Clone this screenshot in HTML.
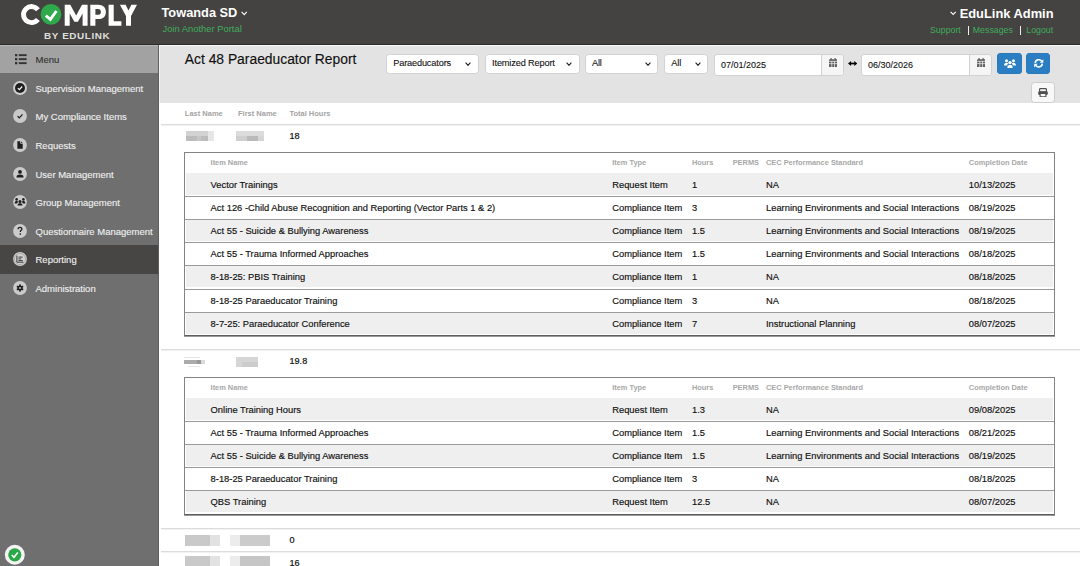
<!DOCTYPE html>
<html><head><meta charset="utf-8">
<style>
*{box-sizing:border-box;margin:0;padding:0}
html,body{width:1080px;height:566px;overflow:hidden;background:#fff;font-family:"Liberation Sans",sans-serif}
body{position:relative}
.a{position:absolute;white-space:nowrap}
#hdr{left:0;top:0;width:1080px;height:45px;background:#454341;border-bottom:1px solid #2d2b29}
#side{left:0;top:45px;width:159px;height:521px;background:#6f6f6f;border-right:1px solid #5e5e5e}
#menu{left:0;top:0;width:158px;height:28px;background:#a2a2a2;border-top:1px solid #b8b8b8}
.si{position:absolute;left:0;width:158px;height:28.6px;color:#f0f0f0;font-size:9.5px;line-height:30.4px;-webkit-text-stroke:0.12px currentColor;padding-left:35.5px;white-space:nowrap}
.si svg{position:absolute;left:13.3px;top:7px;width:14px;height:14px}
#tool{left:159px;top:45px;width:921px;height:58px;background:#e3e3e3;border-top:1px solid #fafafa;border-left:1px solid #f4f4f4}
.dd{position:absolute;top:53.5px;height:20px;background:#fff;border:1px solid #d2d2d2;border-radius:3.5px;font-size:9.2px;letter-spacing:-0.15px;color:#111;line-height:17px;-webkit-text-stroke:0.1px #111;padding-left:6.5px;white-space:nowrap}
.dd svg{position:absolute;top:7px;width:6px;height:4.2px}
.dt{position:absolute;top:53.6px;height:22.4px;background:#fff;border:1px solid #d2d2d2;border-radius:3px;font-size:9px;color:#111;line-height:20.4px;padding-left:6px;-webkit-text-stroke:0.1px #111}
.dt .ad{position:absolute;right:0;top:0;width:22px;height:20.4px;background:#f5f5f5;border-left:1px solid #d2d2d2;border-radius:0 3px 3px 0}
.dt .ad svg{position:absolute;left:6.6px;top:3.3px;width:8.4px;height:9.2px}
.btn{position:absolute;top:53px;height:21px;background:#2b7ec1;border-radius:3px;border:1px solid #2a7abb}
.btn svg{position:absolute}
.lk{top:25.5px;font-size:8.8px;color:#40ac5c;line-height:8.8px}
.hl{position:absolute;left:161px;width:920px;height:1px;background:#dcdcdc;box-shadow:0 1px 0 #f2f2f2}
.lbl{position:absolute;font-size:7.5px;font-weight:bold;color:#a4a4a4;white-space:nowrap;line-height:10px}
.num{position:absolute;left:289.5px;font-size:9.1px;color:#111;line-height:12px;-webkit-text-stroke:0.2px #111}
.bl1{position:absolute;background:#c9c9c9}
.tb{position:absolute;left:184px;width:871px;border:1px solid #838383;border-bottom:1px solid #5e5e5e;box-shadow:0 1px 0 #9a9a9a;background:#fff}
.th{position:absolute;left:0;top:0;width:100%;height:20px}
.th span{position:absolute;top:0;line-height:20px;font-size:7.4px;font-weight:bold;color:#a8a8a8;white-space:nowrap}
.r{position:absolute;left:0;width:100%;height:23.1px;font-size:9.35px;color:#111;-webkit-text-stroke:0.16px #111}
.r.g{background:#efefef;box-shadow:inset 1px 0 0 #fff, inset -1px 0 0 #fff, inset 0 -1px 0 #fff}
.r.bl{border-top:1px solid #9a9a9a}
.r span{position:absolute;top:1px;line-height:22px;white-space:nowrap}
.r.bl span{top:0}
</style></head><body>
<div id="hdr" class="a">
  <svg class="a" style="left:0;top:0" width="150" height="44" viewBox="0 0 150 44">
    <path d="M37.94 9.64 A8.05 8.05 0 1 0 37.94 19.56" fill="none" stroke="#fff" stroke-width="4.9"/>
    <circle cx="51" cy="14.4" r="10.4" fill="#2eaa4c"/>
    <path d="M45.8 15.6 L50.4 19.4 L56.4 11" fill="none" stroke="#fff" stroke-width="2.8"/>
    <path d="M64.7 25.7 V4.7 H70.3 L76.15 15.5 L82 4.7 H87.6 V25.7 H82.6 V13.5 L77.9 21.8 H74.4 L69.7 13.5 V25.7 Z" fill="#fff"/>
    <path d="M90.3 25.7 V4.7 H98.2 C103.2 4.7 105.9 7.6 105.9 11.9 C105.9 16.2 103.2 19.1 98.2 19.1 H95.4 V25.7 Z M95.4 9 V14.8 H97.9 C99.9 14.8 100.9 13.7 100.9 11.9 C100.9 10.1 99.9 9 97.9 9 Z" fill="#fff"/>
    <path d="M108.6 4.7 H113.7 V21.3 H121.4 V25.7 H108.6 Z" fill="#fff"/>
    <path d="M119.9 4.7 H125.6 L128.5 10.6 L131.4 4.7 H137 L131 16 V25.7 H126 V16 Z" fill="#fff"/>
  </svg>
  <div class="a" style="left:44px;top:31.4px;font-size:9.9px;font-weight:bold;color:#dedede;letter-spacing:0.62px;line-height:9.9px">BY EDULINK</div>
  <div class="a" style="left:161.5px;top:6.5px;font-size:12.8px;font-weight:bold;color:#fff;line-height:12.8px">Towanda SD</div>
  <svg class="a" style="left:240.8px;top:10.8px" width="7" height="5" viewBox="0 0 7 5"><path d="M0.6 0.8 L3.2 3.6 L5.8 0.8" fill="none" stroke="#fff" stroke-width="1.1"/></svg>
  <div class="a" style="left:162.5px;top:24.1px;font-size:9.4px;color:#40ac5c;line-height:9.4px">Join Another Portal</div>
  <div class="a" style="right:26.5px;top:7.9px;font-size:12.87px;font-weight:bold;color:#fff;line-height:12.87px">EduLink Admin</div>
  <svg class="a" style="left:949.8px;top:11.2px" width="7" height="5" viewBox="0 0 7 5"><path d="M0.6 0.8 L3.2 3.5 L5.8 0.8" fill="none" stroke="#fff" stroke-width="1.1"/></svg>
  <div class="a lk" style="right:119.2px">Support</div>
  <div class="a" style="left:967.6px;top:26px;width:1.1px;height:8.8px;background:#f0f0f0"></div>
  <div class="a lk" style="left:972.8px">Messages</div>
  <div class="a" style="left:1019.7px;top:26px;width:1.1px;height:8.8px;background:#f0f0f0"></div>
  <div class="a lk" style="right:26.8px">Logout</div>
</div>
<div id="side" class="a">
  <div id="menu" class="a"></div>
</div>
<div class="si" style="top:45px;color:#333">Menu
  <svg viewBox="0 0 12 10.5" style="left:14.6px;top:9.2px;width:12px;height:10.5px"><g fill="#333"><rect x="0" y="0" width="2.3" height="2.3"/><rect x="0" y="4" width="2.3" height="2.3"/><rect x="0" y="8" width="2.3" height="2.3"/><rect x="3.8" y="0.2" width="7.8" height="1.9"/><rect x="3.8" y="4.2" width="7.8" height="1.9"/><rect x="3.8" y="8.2" width="7.8" height="1.9"/></g></svg>
</div>
<div class="si" style="top:73.70px">Supervision Management<svg viewBox="0 0 14 14"><circle cx="7" cy="7" r="6.9" fill="#d0d0d0"/><circle cx="7" cy="7" r="5" fill="#1e1e1e"/><path d="M4.8 7.1 L6.4 8.6 L9.2 5.5" fill="none" stroke="#fff" stroke-width="1.2"/></svg></div>
<div class="si" style="top:102.30px">My Compliance Items<svg viewBox="0 0 14 14"><circle cx="7" cy="7" r="6.9" fill="#c9c9c9"/><path d="M4.5 7.1 L6.3 8.8 L9.5 5.4" fill="none" stroke="#1e1e1e" stroke-width="1.2"/></svg></div>
<div class="si" style="top:130.90px">Requests<svg viewBox="0 0 14 14"><circle cx="7" cy="7" r="6.9" fill="#cbcbcb"/><path d="M4.4 3.2 H8 L9.7 4.9 V10.8 H4.4 Z" fill="#1e1e1e"/><path d="M7.6 3 V5.3 H9.9" fill="none" stroke="#cbcbcb" stroke-width="0.9"/></svg></div>
<div class="si" style="top:159.50px">User Management<svg viewBox="0 0 14 14"><circle cx="7" cy="7" r="6.9" fill="#cbcbcb"/><circle cx="7" cy="4.9" r="1.9" fill="#1e1e1e"/><path d="M3.4 10.4 C3.6 8.3 5 7.6 7 7.6 C9 7.6 10.4 8.3 10.6 10.4 Z" fill="#1e1e1e"/></svg></div>
<div class="si" style="top:188.10px">Group Management<svg viewBox="0 0 14 14"><circle cx="7" cy="7" r="6.9" fill="#cbcbcb"/><g fill="#1e1e1e"><circle cx="7" cy="6.6" r="1.5"/><circle cx="3.6" cy="4.4" r="1.3"/><circle cx="10.4" cy="4.4" r="1.3"/><path d="M4.5 10.6 C4.6 8.8 5.6 8.3 7 8.3 C8.4 8.3 9.4 8.8 9.5 10.6 Z"/><path d="M1.6 8.4 C1.7 6.6 2.6 6.1 3.6 6.1 C4.4 6.1 5 6.4 5.3 7 C4.7 7.3 4.3 7.8 4.1 8.4 Z"/><path d="M12.4 8.4 C12.3 6.6 11.4 6.1 10.4 6.1 C9.6 6.1 9 6.4 8.7 7 C9.3 7.3 9.7 7.8 9.9 8.4 Z"/></g></svg></div>
<div class="si" style="top:216.70px">Questionnaire Management<svg viewBox="0 0 14 14"><circle cx="7" cy="7" r="6.9" fill="#cbcbcb"/><path d="M5.1 5.3 C5.1 4 6 3.3 7 3.3 C8.1 3.3 8.9 4 8.9 5 C8.9 6.3 7.3 6.4 7.3 7.9" fill="none" stroke="#1e1e1e" stroke-width="1.3"/><circle cx="7.3" cy="10" r="0.85" fill="#1e1e1e"/></svg></div>
<div class="si" style="top:245.30px;background:#484644">Reporting<svg viewBox="0 0 14 14"><circle cx="7" cy="7" r="6.9" fill="#d2d2d2"/><circle cx="7" cy="7" r="5.6" fill="none" stroke="#9a9a9a" stroke-width="0.7"/><path d="M3.9 3.6 V10.2 H10.4" fill="none" stroke="#3a3a3a" stroke-width="1"/><path d="M5.5 5.1 H9.6 M5.5 6.9 H8.2 M5.5 8.6 H9.8" fill="none" stroke="#3a3a3a" stroke-width="1"/></svg></div>
<div class="si" style="top:273.90px">Administration<svg viewBox="0 0 14 14"><circle cx="7" cy="7" r="6.9" fill="#cbcbcb"/><g fill="#1e1e1e" transform="translate(7 7)"><circle r="2.5"/><rect x="-0.85" y="-3.6" width="1.7" height="7.2"/><rect x="-0.85" y="-3.6" width="1.7" height="7.2" transform="rotate(60)"/><rect x="-0.85" y="-3.6" width="1.7" height="7.2" transform="rotate(120)"/></g><circle cx="7" cy="7" r="0.9" fill="#cbcbcb"/></svg></div>
<div id="tool" class="a"></div>
<div class="a" style="left:184.8px;top:53px;font-size:13.85px;color:#111;line-height:13.85px;-webkit-text-stroke:0.15px #111">Act 48 Paraeducator Report</div>
<div class="dd" style="left:385.7px;width:93.5px">Paraeducators<svg viewBox="0 0 6 4.2" style="left:78.6px"><path d="M0.6 0.6 L3 3.3 L5.4 0.6" fill="none" stroke="#222" stroke-width="1.15"/></svg></div>
<div class="dd" style="left:484.6px;width:95px">Itemized Report<svg viewBox="0 0 6 4.2" style="left:80.6px"><path d="M0.6 0.6 L3 3.3 L5.4 0.6" fill="none" stroke="#222" stroke-width="1.15"/></svg></div>
<div class="dd" style="left:584.5px;width:73.8px">All<svg viewBox="0 0 6 4.2" style="left:59.4px"><path d="M0.6 0.6 L3 3.3 L5.4 0.6" fill="none" stroke="#222" stroke-width="1.15"/></svg></div>
<div class="dd" style="left:663.8px;width:44.4px">All<svg viewBox="0 0 6 4.2" style="left:29.9px"><path d="M0.6 0.6 L3 3.3 L5.4 0.6" fill="none" stroke="#222" stroke-width="1.15"/></svg></div>
<div class="dt" style="left:714px;width:130px">07/01/2025<div class="ad"><svg viewBox="0 0 8.4 9.2"><g fill="#606060"><rect x="0" y="1.2" width="8.4" height="8" rx="1"/><rect x="1.5" y="0" width="1.4" height="2.2" rx="0.5"/><rect x="5.5" y="0" width="1.4" height="2.2" rx="0.5"/></g><g fill="#f5f5f5"><rect x="0" y="2.9" width="8.4" height="0.7"/><rect x="0" y="5.4" width="8.4" height="0.7"/><rect x="2.5" y="3" width="0.7" height="6.2"/><rect x="5.2" y="3" width="0.7" height="6.2"/></g></svg></div></div>
<svg class="a" style="left:848px;top:60.8px" width="9.4" height="5" viewBox="0 0 9.4 5"><path d="M2.5 2.5 H6.9" stroke="#000" stroke-width="1.7"/><path d="M0 2.5 L3.1 0 V5 Z M9.4 2.5 L6.3 0 V5 Z" fill="#000"/></svg>
<div class="dt" style="left:861px;width:131px">06/30/2026<div class="ad"><svg viewBox="0 0 8.4 9.2"><g fill="#606060"><rect x="0" y="1.2" width="8.4" height="8" rx="1"/><rect x="1.5" y="0" width="1.4" height="2.2" rx="0.5"/><rect x="5.5" y="0" width="1.4" height="2.2" rx="0.5"/></g><g fill="#f5f5f5"><rect x="0" y="2.9" width="8.4" height="0.7"/><rect x="0" y="5.4" width="8.4" height="0.7"/><rect x="2.5" y="3" width="0.7" height="6.2"/><rect x="5.2" y="3" width="0.7" height="6.2"/></g></svg></div></div>
<div class="btn" style="left:996.5px;width:25.7px"><svg viewBox="0 0 12 9" style="left:6px;top:4.9px;width:12px;height:9px"><g fill="#fff"><circle cx="2.5" cy="1.7" r="1.5"/><circle cx="9.5" cy="1.7" r="1.5"/><circle cx="6" cy="3.6" r="1.7"/><path d="M0 6.4 C0 4.6 1 3.7 2.5 3.7 C3.3 3.7 3.9 4 4.3 4.5 C3.7 5 3.3 5.7 3.2 6.4 Z"/><path d="M12 6.4 C12 4.6 11 3.7 9.5 3.7 C8.7 3.7 8.1 4 7.7 4.5 C8.3 5 8.7 5.7 8.8 6.4 Z"/><path d="M3.3 9 C3.3 7 4.4 5.8 6 5.8 C7.6 5.8 8.7 7 8.7 9 Z"/></g></svg></div>
<div class="btn" style="left:1026.2px;width:24px"><svg viewBox="0 0 10 9" style="left:6.9px;top:5.4px;width:9.5px;height:8.6px"><g fill="none" stroke="#fff" stroke-width="1.6"><path d="M1.3 4.2 A3.7 3.7 0 0 1 8.1 2.4"/><path d="M8.7 4.8 A3.7 3.7 0 0 1 1.9 6.6"/></g><path d="M9.8 0.2 V3.9 H6.1 Z" fill="#fff"/><path d="M0.2 8.8 V5.1 H3.9 Z" fill="#fff"/></svg></div>
<div class="a" style="left:1031px;top:82px;width:23.6px;height:21.2px;background:#f8f8f8;border:1px solid #cdcdcd;border-radius:3.5px"><svg class="a" style="left:6.2px;top:4.6px" width="10" height="9.4" viewBox="0 0 10 9.4"><rect x="1.6" y="0.6" width="6.8" height="3.4" rx="0.7" fill="none" stroke="#505050" stroke-width="1.15"/><rect x="0.2" y="3.3" width="9.6" height="3.8" rx="1.3" fill="#505050"/><rect x="2.1" y="5.4" width="5.8" height="3.4" rx="0.4" fill="#f8f8f8" stroke="#505050" stroke-width="1.15"/></svg></div>
<div class="hl" style="top:124px"></div>
<div class="lbl" style="left:184.8px;top:108.5px">Last Name</div>
<div class="lbl" style="left:238px;top:108.5px">First Name</div>
<div class="lbl" style="left:289.4px;top:108.5px">Total Hours</div>
<div class="hl" style="top:124px"></div>
<div class="num" style="top:130.3px">18</div>
<div class="bl1" style="left:185.8px;top:130.6px;width:22.1px;height:5.0px;background:#d2d2d2"></div>
<div class="bl1" style="left:207.9px;top:130.6px;width:5.8px;height:10.4px;background:#e6e6e6"></div>
<div class="bl1" style="left:185.8px;top:135.6px;width:22.1px;height:5.4px;background:#bcbcbc"></div>
<div class="bl1" style="left:197px;top:135.6px;width:4px;height:5.4px;background:#c8c8c8"></div>
<div class="bl1" style="left:236.3px;top:130.6px;width:27.4px;height:5.0px;background:#dcdcdc"></div>
<div class="bl1" style="left:236.3px;top:135.6px;width:10.7px;height:5.4px;background:#cfcfcf"></div>
<div class="bl1" style="left:247px;top:135.6px;width:11px;height:5.4px;background:#bababa"></div>
<div class="bl1" style="left:258px;top:135.6px;width:5.7px;height:5.4px;background:#d6d6d6"></div>
<div class="hl" style="top:349px"></div>
<div class="num" style="top:355.3px">19.8</div>
<div class="bl1" style="left:184.2px;top:357px;width:15.8px;height:1px;background:#e4e4e4"></div>
<div class="bl1" style="left:184.2px;top:359.9px;width:12.8px;height:3.8px;background:#ababab"></div>
<div class="bl1" style="left:197px;top:359.9px;width:4px;height:3.8px;background:#999999"></div>
<div class="bl1" style="left:201px;top:359.9px;width:4.4px;height:3.8px;background:#dadada"></div>
<div class="bl1" style="left:188px;top:366px;width:12px;height:1.2px;background:#e6e6e6"></div>
<div class="bl1" style="left:236.3px;top:356.6px;width:22.0px;height:10.8px;background:#d6d6d6"></div>
<div class="bl1" style="left:242px;top:362px;width:16.3px;height:5.4px;background:#cccccc"></div>
<div class="hl" style="top:528px"></div>
<div class="num" style="top:534.3px">0</div>
<div class="bl1" style="left:185.1px;top:535.4px;width:25.0px;height:10.2px;background:#c9c9c9"></div>
<div class="bl1" style="left:210.1px;top:535.4px;width:9.7px;height:10.2px;background:#e2e2e2"></div>
<div class="bl1" style="left:230px;top:535.4px;width:9.7px;height:10.2px;background:#ececec"></div>
<div class="bl1" style="left:239.7px;top:535.4px;width:30.1px;height:10.2px;background:#cbcbcb"></div>
<div class="hl" style="top:551px"></div>
<div class="num" style="top:557.3px">16</div>
<div class="bl1" style="left:185.1px;top:555.8px;width:25.0px;height:10.2px;background:#c9c9c9"></div>
<div class="bl1" style="left:210.1px;top:555.8px;width:9.7px;height:10.2px;background:#e2e2e2"></div>
<div class="bl1" style="left:230px;top:555.8px;width:9.7px;height:10.2px;background:#ececec"></div>
<div class="bl1" style="left:239.7px;top:555.8px;width:30.1px;height:10.2px;background:#c6c6c6"></div>
<div class="tb" style="top:152px;height:183.7px">
<div class="th"><span style="left:25.6px">Item Name</span><span style="left:427.2px">Item Type</span><span style="left:507.0px">Hours</span><span style="left:547.7px">PERMS</span><span style="left:581.0px">CEC Performance Standard</span><span style="left:783.8px">Completion Date</span></div>
<div class="r g" style="top:20.0px"><span style="left:25.6px">Vector Trainings</span><span style="left:427.2px">Request Item</span><span style="left:507.0px">1</span><span style="left:581.0px">NA</span><span style="left:783.8px">10/13/2025</span></div>
<div class="r bl" style="top:43.1px"><span style="left:25.6px">Act 126 -Child Abuse Recognition and Reporting (Vector Parts 1 &amp; 2)</span><span style="left:427.2px">Compliance Item</span><span style="left:507.0px">3</span><span style="left:581.0px">Learning Environments and Social Interactions</span><span style="left:783.8px">08/19/2025</span></div>
<div class="r g bl" style="top:66.2px"><span style="left:25.6px">Act 55 - Suicide &amp; Bullying Awareness</span><span style="left:427.2px">Compliance Item</span><span style="left:507.0px">1.5</span><span style="left:581.0px">Learning Environments and Social Interactions</span><span style="left:783.8px">08/19/2025</span></div>
<div class="r bl" style="top:89.3px"><span style="left:25.6px">Act 55 - Trauma Informed Approaches</span><span style="left:427.2px">Compliance Item</span><span style="left:507.0px">1.5</span><span style="left:581.0px">Learning Environments and Social Interactions</span><span style="left:783.8px">08/18/2025</span></div>
<div class="r g bl" style="top:112.4px"><span style="left:25.6px">8-18-25: PBIS Training</span><span style="left:427.2px">Compliance Item</span><span style="left:507.0px">1</span><span style="left:581.0px">NA</span><span style="left:783.8px">08/18/2025</span></div>
<div class="r bl" style="top:135.5px"><span style="left:25.6px">8-18-25 Paraeducator Training</span><span style="left:427.2px">Compliance Item</span><span style="left:507.0px">3</span><span style="left:581.0px">NA</span><span style="left:783.8px">08/18/2025</span></div>
<div class="r g bl" style="top:158.6px"><span style="left:25.6px">8-7-25: Paraeducator Conference</span><span style="left:427.2px">Compliance Item</span><span style="left:507.0px">7</span><span style="left:581.0px">Instructional Planning</span><span style="left:783.8px">08/07/2025</span></div>
</div>
<div class="tb" style="top:377px;height:137.5px">
<div class="th"><span style="left:25.6px">Item Name</span><span style="left:427.2px">Item Type</span><span style="left:507.0px">Hours</span><span style="left:547.7px">PERMS</span><span style="left:581.0px">CEC Performance Standard</span><span style="left:783.8px">Completion Date</span></div>
<div class="r g" style="top:20.0px"><span style="left:25.6px">Online Training Hours</span><span style="left:427.2px">Request Item</span><span style="left:507.0px">1.3</span><span style="left:581.0px">NA</span><span style="left:783.8px">09/08/2025</span></div>
<div class="r bl" style="top:43.1px"><span style="left:25.6px">Act 55 - Trauma Informed Approaches</span><span style="left:427.2px">Compliance Item</span><span style="left:507.0px">1.5</span><span style="left:581.0px">Learning Environments and Social Interactions</span><span style="left:783.8px">08/21/2025</span></div>
<div class="r g bl" style="top:66.2px"><span style="left:25.6px">Act 55 - Suicide &amp; Bullying Awareness</span><span style="left:427.2px">Compliance Item</span><span style="left:507.0px">1.5</span><span style="left:581.0px">Learning Environments and Social Interactions</span><span style="left:783.8px">08/19/2025</span></div>
<div class="r bl" style="top:89.3px"><span style="left:25.6px">8-18-25 Paraeducator Training</span><span style="left:427.2px">Compliance Item</span><span style="left:507.0px">3</span><span style="left:581.0px">NA</span><span style="left:783.8px">08/18/2025</span></div>
<div class="r g bl" style="top:112.4px"><span style="left:25.6px">QBS Training</span><span style="left:427.2px">Request Item</span><span style="left:507.0px">12.5</span><span style="left:581.0px">NA</span><span style="left:783.8px">08/07/2025</span></div>
</div>
<svg class="a" style="left:4px;top:543.5px" width="22" height="22" viewBox="0 0 22 22"><circle cx="10.8" cy="10.8" r="10" fill="#f4f4f4"/><circle cx="10.8" cy="10.8" r="6.6" fill="#2aa748"/><path d="M7.8 11 L10 13.2 L13.8 8.6" fill="none" stroke="#fff" stroke-width="1.6"/></svg>
</body></html>
